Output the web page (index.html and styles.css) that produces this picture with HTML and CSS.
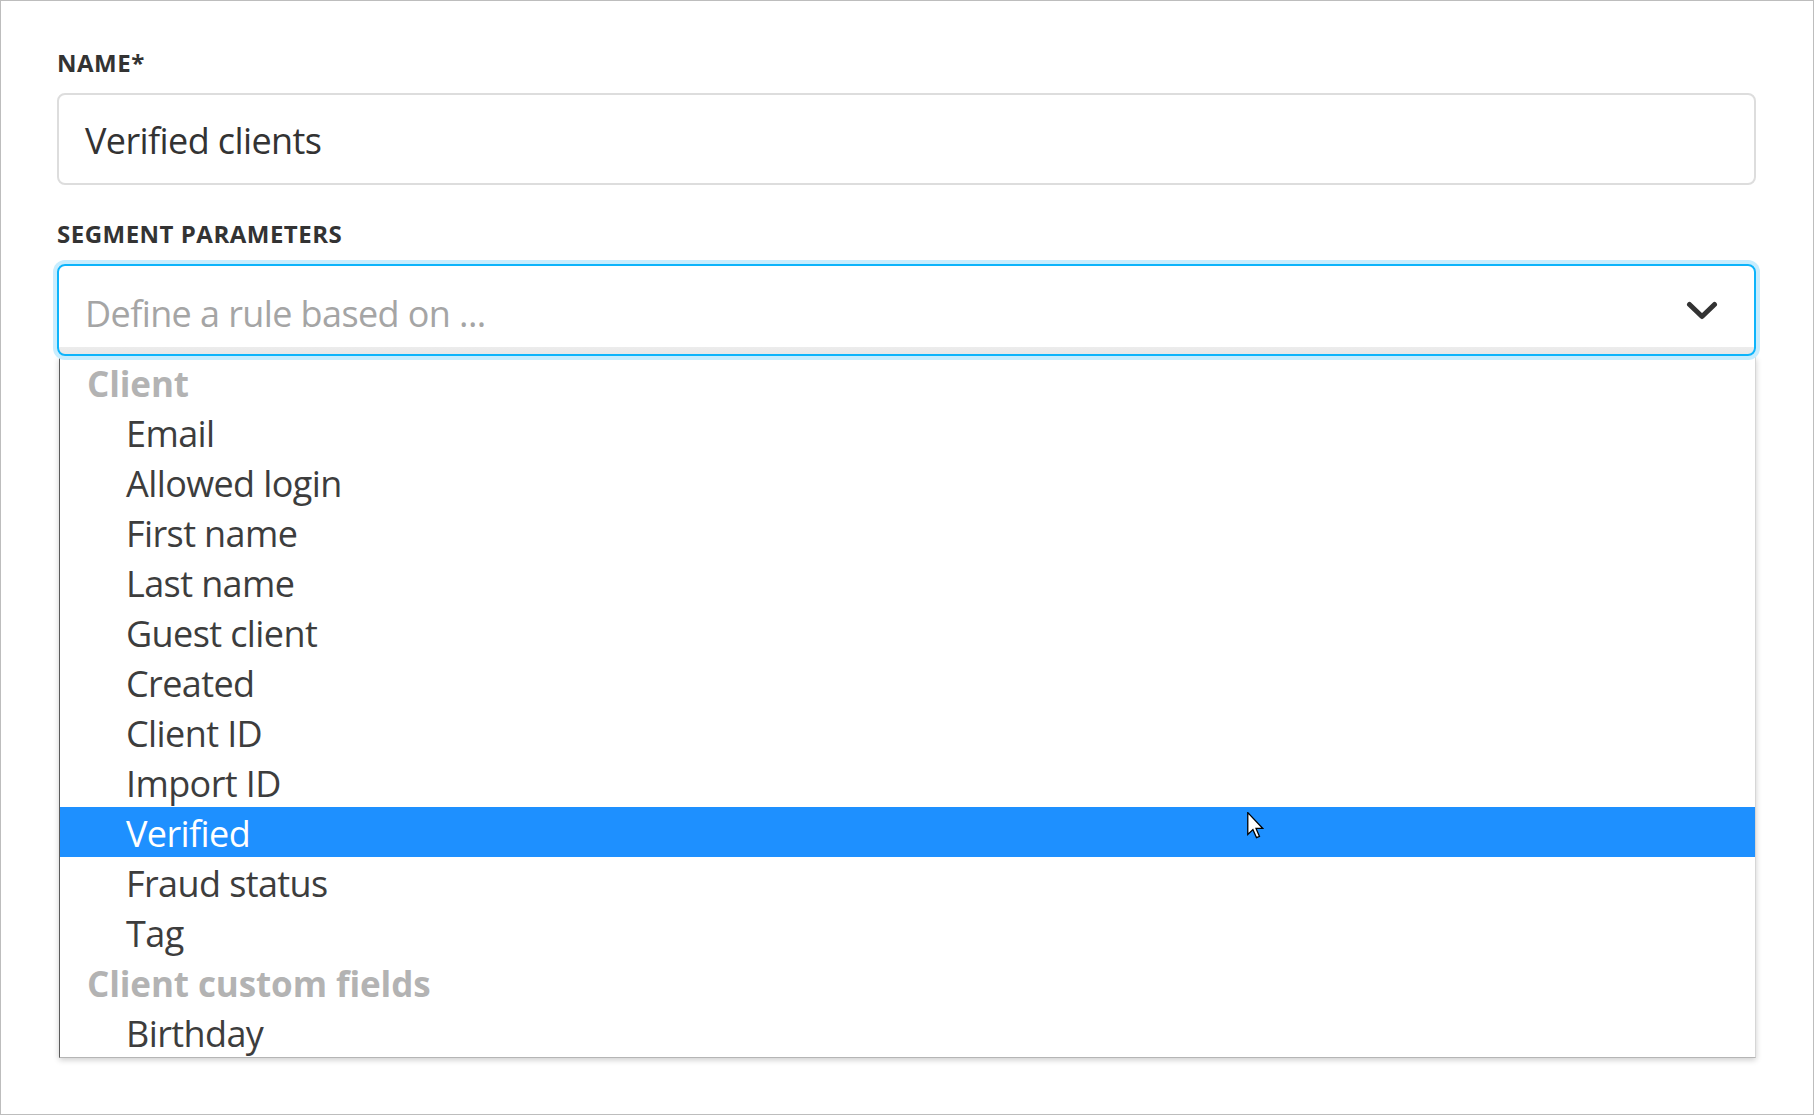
FILE: index.html
```html
<!DOCTYPE html>
<html lang="en">
<head>
<meta charset="utf-8">
<title>Segment</title>
<link rel="stylesheet" href="styles.css">
</head>
<body>
<div class="page">
  <div class="field">
    <div class="label">NAME*</div>
    <div class="input">Verified clients</div>
  </div>
  <div class="field field-segment">
    <div class="label">SEGMENT PARAMETERS</div>
    <div class="select">
      <span class="placeholder">Define a rule based on ...</span>
      <svg class="chevron" viewBox="0 0 32 20" width="32" height="20" aria-hidden="true">
        <polyline points="3.5,3.5 16,15.5 28.5,3.5" fill="none" stroke="#333" stroke-width="5" stroke-linecap="round" stroke-linejoin="round"/>
      </svg>
    </div>
    <ul class="menu">
      <li class="group">Client</li>
      <li class="option">Email</li>
      <li class="option">Allowed login</li>
      <li class="option">First name</li>
      <li class="option">Last name</li>
      <li class="option">Guest client</li>
      <li class="option">Created</li>
      <li class="option">Client ID</li>
      <li class="option">Import ID</li>
      <li class="option active">Verified</li>
      <li class="option">Fraud status</li>
      <li class="option">Tag</li>
      <li class="group">Client custom fields</li>
      <li class="option">Birthday</li>
    </ul>
  </div>
  <svg class="cursor" viewBox="0 0 13 21" width="17" height="27" aria-hidden="true">
    <path d="M0.5,0.5 L0.5,17.5 L4.5,13.7 L7.3,20 L9.6,19 L6.9,12.8 L12.2,12.8 Z" fill="#fff" stroke="#000" stroke-width="1" stroke-linejoin="miter"/>
  </svg>
</div>
</body>
</html>
```

FILE: styles.css
```css
* { box-sizing: border-box; }

html, body {
  margin: 0;
  padding: 0;
  background: #fff;
}

body {
  font-family: "Open Sans", "Noto Sans", sans-serif;
  color: #3a3a3a;
}

.page {
  position: relative;
  width: 1814px;
  height: 1115px;
  border: 1px solid #bdbdbd;
  padding: 47px 57px 0 56px;
  overflow: hidden;
}

.field {
  display: flex;
  flex-direction: column;
}

.field-segment {
  margin-top: 34px;
}

.label {
  font-size: 24px;
  font-weight: 700;
  line-height: 30px;
  color: #333;
  letter-spacing: 0.5px;
  margin-bottom: 15px;
}

.input {
  height: 92px;
  border: 2px solid #dddddd;
  border-radius: 8px;
  padding: 4px 26px 0;
  font-size: 36px;
  line-height: 84px;
  color: #333;
  letter-spacing: -0.6px;
  background: #fff;
}

.select {
  position: relative;
  height: 92px;
  border: 2px solid #0db4fb;
  border-radius: 8px;
  box-shadow: 0 0 0 4px #c8edfe;
  padding: 1px 36px 0 26px;
  display: flex;
  align-items: center;
  justify-content: space-between;
  background: linear-gradient(to bottom, #fff 0, #fff calc(100% - 7px), #ececec calc(100% - 7px), #e8e8e8 100%);
  z-index: 1;
}

.placeholder {
  font-size: 36px;
  line-height: 50px;
  color: #a5a5a5;
  letter-spacing: -0.6px;
  margin-top: 6px;
}

.chevron {
  display: block;
  width: 32px;
  height: 20px;
}

.menu {
  list-style: none;
  margin: 1px 0 0 2px;
  padding: 0;
  background: #fff;
  border-left: 1px solid #5c5c5c;
  border-bottom: 1px solid #b5b5b5;
  border-right: 1px solid #d6d6d6;
  box-shadow: 0 2px 6px rgba(0, 0, 0, 0.2);
}

.menu li {
  height: 50px;
  padding-top: 4px;
  line-height: 46px;
  font-size: 36px;
  white-space: nowrap;
}

.group {
  font-weight: 700;
  font-size: 35px !important;
  color: #b3b3b3;
  padding-left: 27px;
  letter-spacing: -0.1px;
}

.option {
  color: #3d3d3d;
  padding-left: 66px;
  letter-spacing: -0.6px;
}

.option.active {
  background: #1e90ff;
  color: #fff;
}

.cursor {
  position: absolute;
  left: 1246px;
  top: 811px;
  z-index: 5;
}
```
